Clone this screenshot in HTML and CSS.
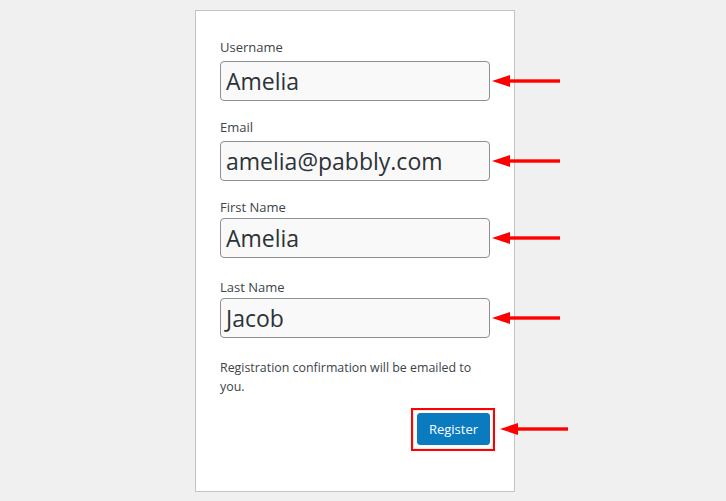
FILE: index.html
```html
<!DOCTYPE html>
<html>
<head>
<meta charset="utf-8">
<link rel="stylesheet" href="styles.css">
</head>
<body>
<div class="card">
  <div class="field">
    <label class="label">Username</label>
    <div class="input">Amelia</div>
    <svg class="arrow" width="68" height="14" viewBox="0 0 68 14"><polygon points="0,7 18,1 18,13" fill="#f00"/><rect x="16" y="5.3" width="52" height="3.4" fill="#f00"/></svg>
  </div>
  <div class="field">
    <label class="label">Email</label>
    <div class="input">amelia@pabbly.com</div>
    <svg class="arrow" width="68" height="14" viewBox="0 0 68 14"><polygon points="0,7 18,1 18,13" fill="#f00"/><rect x="16" y="5.3" width="52" height="3.4" fill="#f00"/></svg>
  </div>
  <div class="field field-tight">
    <label class="label">First Name</label>
    <div class="input">Amelia</div>
    <svg class="arrow" width="68" height="14" viewBox="0 0 68 14"><polygon points="0,7 18,1 18,13" fill="#f00"/><rect x="16" y="5.3" width="52" height="3.4" fill="#f00"/></svg>
  </div>
  <div class="field field-tight">
    <label class="label">Last Name</label>
    <div class="input">Jacob</div>
    <svg class="arrow" width="68" height="14" viewBox="0 0 68 14"><polygon points="0,7 18,1 18,13" fill="#f00"/><rect x="16" y="5.3" width="52" height="3.4" fill="#f00"/></svg>
  </div>
  <p class="note">Registration confirmation will be emailed to you.</p>
  <div class="actions">
    <div class="btn-wrap">
      <button class="btn">Register</button>
      <svg class="arrow arrow-btn" width="68" height="14" viewBox="0 0 68 14"><polygon points="0,7 18,1 18,13" fill="#f00"/><rect x="16" y="5.3" width="52" height="3.4" fill="#f00"/></svg>
    </div>
  </div>
</div>
</body>
</html>
```
FILE: styles.css
```css
html, body {
  margin: 0;
  padding: 0;
  background: #f0f0f1;
}
body {
  font-family: "Open Sans", "Noto Sans", sans-serif;
  color: #3c434a;
}
.card {
  box-sizing: border-box;
  width: 320px;
  margin: 10px 0 0 195px;
  background: #fff;
  border: 1px solid #c3c4c7;
  padding: 26px 24px 46px;
  height: 482px;
}
.field {
  position: relative;
  margin-bottom: 16px;
}
.field-tight .label {
  margin-bottom: 0;
}
.field-tight {
  margin-bottom: 19px;
}
.label {
  display: block;
  font-size: 13px;
  line-height: 21px;
  margin-bottom: 3px;
  color: #3c434a;
}
.input {
  box-sizing: border-box;
  height: 40px;
  border: 1px solid #8c8f94;
  border-radius: 4px;
  background: #f9f9f9;
  font-size: 23px;
  line-height: 38px;
  padding: 0 5px;
  color: #2c3338;
}
.arrow {
  position: absolute;
  right: -70px;
  bottom: 13px;
  display: block;
}
.note {
  margin: 20px 0 0;
  font-size: 12.4px;
  line-height: 19px;
  color: #3c434a;
}
.actions {
  display: flex;
  justify-content: flex-end;
  margin-top: 17px;
}
.btn-wrap {
  position: relative;
}
.btn-wrap::after {
  content: "";
  position: absolute;
  top: -5px;
  left: -6px;
  right: -5px;
  bottom: -6px;
  border: 2px solid #f00;
  box-shadow: inset 0 0 0 1px #fde8e8;
}
.btn {
  display: block;
  height: 32px;
  width: 73px;
  background: #0a7bbf;
  border: 1px solid #0a7bbf;
  border-radius: 3px;
  color: #fff;
  font-family: "Open Sans", "Noto Sans", sans-serif;
  font-size: 13px;
  padding: 0;
}
.arrow-btn {
  right: -78px;
  bottom: 9px;
}
```
